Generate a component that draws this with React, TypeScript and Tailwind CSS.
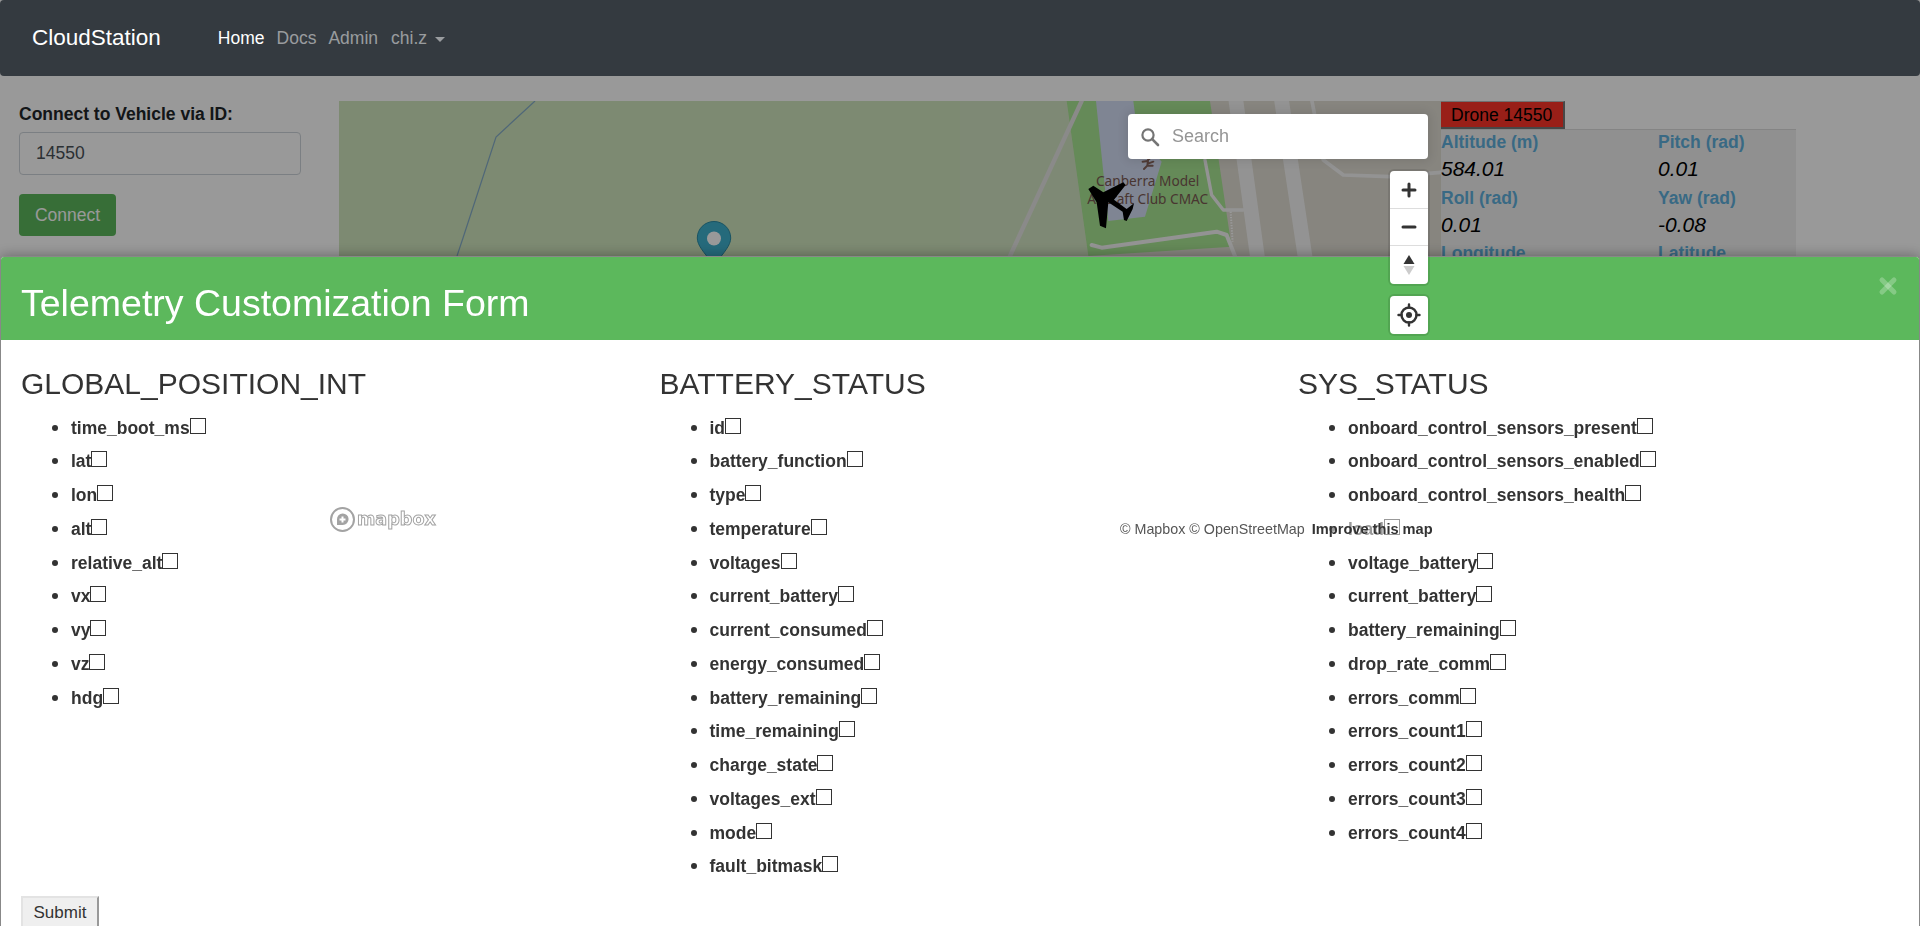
import { X } from 'lucide-react'

const COLUMNS = [
  {
    title: 'GLOBAL_POSITION_INT',
    fields: ['time_boot_ms', 'lat', 'lon', 'alt', 'relative_alt', 'vx', 'vy', 'vz', 'hdg'],
  },
  {
    title: 'BATTERY_STATUS',
    fields: [
      'id',
      'battery_function',
      'type',
      'temperature',
      'voltages',
      'current_battery',
      'current_consumed',
      'energy_consumed',
      'battery_remaining',
      'time_remaining',
      'charge_state',
      'voltages_ext',
      'mode',
      'fault_bitmask',
    ],
  },
  {
    title: 'SYS_STATUS',
    fields: [
      'onboard_control_sensors_present',
      'onboard_control_sensors_enabled',
      'onboard_control_sensors_health',
      'load',
      'voltage_battery',
      'current_battery',
      'battery_remaining',
      'drop_rate_comm',
      'errors_comm',
      'errors_count1',
      'errors_count2',
      'errors_count3',
      'errors_count4',
    ],
  },
]

const TELEMETRY = [
  { label: 'Altitude (m)', value: '584.01' },
  { label: 'Pitch (rad)', value: '0.01' },
  { label: 'Roll (rad)', value: '0.01' },
  { label: 'Yaw (rad)', value: '-0.08' },
]

function MapDrawing() {
  return (
    <svg className="absolute inset-0 h-full w-full" viewBox="339 101 1102 445" preserveAspectRatio="none">
      <rect x="339" y="101" width="1102" height="445" fill="#d0e6be" />
      <path d="M535 101 496 137 463 238 457 256" fill="none" stroke="#84acc8" strokeWidth="1.2" />
      {/* marker */}
      <path d="M714 221.5c-9.2 0-16.7 7.3-16.7 16.5 0 7 6 14 16.7 27 10.7-13 16.7-20 16.7-27 0-9.2-7.5-16.5-16.7-16.5z" fill="#3fb1ce" stroke="#2a8ba5" />
      <circle cx="714" cy="238.5" r="7" fill="#fff" />
      <g transform="translate(960 95) scale(0.3333)">
        <path d="M320 18H1443V483H150z" fill="#e1ded4" />
        <path d="M0 18H320L385 483H0z" fill="#d3e5c3" />
        <path d="M320 18H750L808 410 815 455 385 483z" fill="#a8e693" />
        <path d="M408 18H520L532 110 605 200 555 365 445 378z" fill="#d4def5" />
        <g fill="none" stroke="#fff" strokeLinecap="round" strokeLinejoin="round">
          <path d="M365 18 150 483" strokeWidth="13" stroke="#e6e6e4" />
          <path d="M828 18 892 483" strokeWidth="44" stroke="#f6f6f6" />
          <path d="M965 18 1035 483" strokeWidth="44" stroke="#f6f6f6" />
          <path d="M1056 18 1090 195 1150 240 1290 245 1443 232" strokeWidth="11" stroke="#f6f6f6" />
          <path d="M735 195 755 300 790 345 850 345" strokeWidth="10" stroke="#f6f6f6" />
          <path d="M395 450 425 458 770 410 800 420 825 483" strokeWidth="12" stroke="#f6f6f6" />
        </g>
        <path d="M812 350 818 440" fill="none" stroke="#fff" strokeWidth="6" strokeDasharray="4 4" />
        {/* park icon */}
        <g fill="none" stroke="#85645c" strokeWidth="6" strokeLinecap="round">
          <circle cx="566" cy="190" r="3" />
          <path d="M548 200 564 198 562 212 578 212M562 212 552 222M566 205 580 200" />
        </g>
        <text x="563" y="273" textAnchor="middle" fill="#7a5a52" fontSize="41" fontFamily="'Noto Sans', sans-serif">
          Canberra Model
        </text>
        <text x="563" y="327" textAnchor="middle" fill="#7a5a52" fontSize="41" fontFamily="'Noto Sans', sans-serif">
          Aircraft Club CMAC
        </text>
        {/* plane */}
        <path
          d="M385 282 400 272 430 292 490 262 497 270 462 314 500 342 522 325 518 342 500 378 492 375 488 350 445 322 438 400 420 392 410 322z"
          fill="#000"
        />
      </g>
    </svg>
  )
}

function MapControls() {
  return (
    <>
      <div className="absolute top-[13px] right-[13px] z-10 flex h-[45px] w-[300px] items-center rounded-[4px] bg-white shadow-[0_0_10px_2px_rgba(0,0,0,0.1)]">
        <svg className="ml-[12px]" width="20" height="20" viewBox="0 0 20 20" fill="none">
          <circle cx="8" cy="8" r="5.6" stroke="#757575" strokeWidth="2.2" />
          <path d="M12.2 12.2 18 18" stroke="#757575" strokeWidth="2.6" strokeLinecap="round" />
        </svg>
        <span className="ml-[12px] text-[18px] text-[#959595]">Search</span>
      </div>
      <div className="absolute top-[70px] right-[13px] z-10 flex w-[38px] flex-col rounded-[4px] bg-white shadow-[0_0_0_2px_rgba(0,0,0,0.1)]">
        <div className="flex h-[38px] items-center justify-center border-b border-[#ddd]">
          <svg width="18" height="18" viewBox="0 0 18 18">
            <path d="M9 3v12M3 9h12" stroke="#333" strokeWidth="3" strokeLinecap="round" />
          </svg>
        </div>
        <div className="flex h-[37px] items-center justify-center border-b border-[#ddd]">
          <svg width="18" height="18" viewBox="0 0 18 18">
            <path d="M3 9h12" stroke="#333" strokeWidth="3" strokeLinecap="round" />
          </svg>
        </div>
        <div className="flex h-[38px] items-center justify-center">
          <svg width="14" height="24" viewBox="0 0 14 24">
            <path d="M7 2l5.5 9h-11z" fill="#333" />
            <path d="M7 22l5.5-9h-11z" fill="#ccc" />
          </svg>
        </div>
      </div>
      <div className="absolute top-[195px] right-[13px] z-10 flex h-[38px] w-[38px] items-center justify-center rounded-[4px] bg-white shadow-[0_0_0_2px_rgba(0,0,0,0.1)]">
        <svg width="24" height="24" viewBox="0 0 24 24" fill="none">
          <circle cx="12" cy="12" r="7.5" stroke="#333" strokeWidth="2.4" />
          <circle cx="12" cy="12" r="3" fill="#333" />
          <path d="M12 1.5v3M12 19.5v3M1.5 12h3M19.5 12h3" stroke="#333" strokeWidth="2.4" strokeLinecap="round" />
        </svg>
      </div>
      {/* mapbox wordmark */}
      <div className="absolute bottom-[13px] left-[-10px] z-10 flex items-center gap-[1px]">
        <svg width="27" height="27" viewBox="0 0 27 27">
          <circle cx="13.5" cy="13.5" r="11.5" fill="#fff" stroke="#a3a3a3" strokeWidth="2" />
          <path d="M8 19v-5.500a5.800 5.800 0 1 1 5.800 5.500z" fill="#a3a3a3" />
          <path d="M13.500 10.500v6M10.500 13.500h6" stroke="#fff" strokeWidth="2" />
        </svg>
        <span className="font-['DejaVu_Sans'] text-[17.6px] leading-none font-bold text-white [-webkit-text-stroke:1px_#a3a3a3]">
          mapbox
        </span>
      </div>
      <div className="absolute right-0 bottom-[4px] z-10 flex h-[25px] w-[326px] items-center bg-white/50 pl-[5px] text-[14.3px] text-[#555]">
        <span>© Mapbox © OpenStreetMap</span>
        <span className="ml-[7px] text-[14.6px] font-bold text-[#333]">Improve this map</span>
      </div>
    </>
  )
}

function TelemetryModal() {
  return (
    <div className="fixed inset-x-0 top-[256px] bottom-0 z-[5] flex flex-col overflow-hidden rounded-t-[4px] border border-b-0 border-[#888] bg-white shadow-[0_0_14px_rgba(0,0,0,0.35)]">
      <div className="relative flex h-[83px] shrink-0 items-center bg-[#5cb85c] pt-[10px] pl-[20px] text-white">
        <h2 className="text-[37.5px] leading-none">Telemetry Customization Form</h2>
        <X className="absolute top-[17px] right-[19px] h-[24px] w-[24px] text-white/25" strokeWidth={5} />
      </div>
      <div className="grid grid-cols-[repeat(3,638.5px)] pt-[25px] text-[#333]">
        {COLUMNS.map((col) => (
          <div key={col.title} className="pl-[20px]">
            <h3 className="text-[30px] leading-[38px]">{col.title}</h3>
            <ul className="mt-[9.5px] list-disc pl-[50px]">
              {col.fields.map((field) => (
                <li key={field} className="h-[33.75px] text-[17.5px] leading-[27px] font-bold marker:text-[21px]">
                  {field}
                  <input
                    type="checkbox"
                    readOnly
                    className="h-4 w-4 appearance-none border border-[#333] bg-white"
                  />
                </li>
              ))}
            </ul>
          </div>
        ))}
      </div>
      <div className="pl-[20px]">
        <button className="absolute top-[639px] h-[34px] w-[78px] border-2 border-t-[#e3e3e3] border-r-[#999] border-b-[#999] border-l-[#e3e3e3] bg-[#efefef] text-[17px] text-[#333]">
          Submit
        </button>
      </div>
    </div>
  )
}

export default function App() {
  return (
    <div className="h-screen overflow-hidden bg-white font-['Liberation_Sans',sans-serif] text-[#212529]">
      <nav className="relative z-[6] flex h-[76px] items-center rounded-[4px] bg-[#343a40] pl-[32px]">
        <span className="text-[22.5px] text-white">CloudStation</span>
        <div className="ml-[57px] flex items-center gap-[12px] text-[17.5px]">
          <span className="text-white">Home</span>
          <span className="text-white/50">Docs</span>
          <span className="text-white/50">Admin</span>
          <span className="ml-[1px] flex items-center text-white/50">
            chi.z
            <span className="mt-[2px] ml-[8px] border-x-[5px] border-t-[5px] border-x-transparent border-t-white/50" />
          </span>
        </div>
      </nav>

      <div className="flex pt-[25px]">
        <div className="w-[339px] shrink-0 pl-[19px]">
          <label className="block text-[17.5px] leading-[27px] font-bold">Connect to Vehicle via ID:</label>
          <div className="mt-[4px] flex h-[43px] w-[282px] items-center rounded-[4px] border border-[#ced4da] bg-white pl-[16px] text-[17.5px] text-[#495057]">
            14550
          </div>
          <button className="mt-[19px] h-[42px] w-[97px] rounded-[4px] bg-[#5cb85c] text-[17.5px] text-white">
            Connect
          </button>
        </div>

        <div className="relative h-[445px] w-[1102px] shrink-0">
          <MapDrawing />
          <MapControls />
        </div>

        <div className="w-[355px] shrink-0">
          <div className="h-[28px] w-[124px] border-t border-r-2 border-b-2 border-t-[#bbb] border-r-[#777] border-b-[#777] bg-[#ff3528] pl-[10px] text-[17.5px] leading-[26px] text-black">
            Drone 14550
          </div>
          <div className="grid h-[400px] grid-cols-[217px_1fr] content-start border-t border-[#ddd] bg-[#f1f1f1] text-[17.5px]">
            {TELEMETRY.map((item) => (
              <div key={item.label} className="h-[55.5px]">
                <div className="h-[25px] leading-[24px] font-bold text-[#5fb0dc]">{item.label}</div>
                <div className="text-[21px] leading-[28px] text-black italic">{item.value}</div>
              </div>
            ))}
            <div className="leading-[24px] font-bold text-[#5fb0dc]">Longitude</div>
            <div className="leading-[24px] font-bold text-[#5fb0dc]">Latitude</div>
          </div>
        </div>
      </div>

      <div className="fixed inset-0 z-[4] bg-black/40" />
      <TelemetryModal />
    </div>
  )
}
